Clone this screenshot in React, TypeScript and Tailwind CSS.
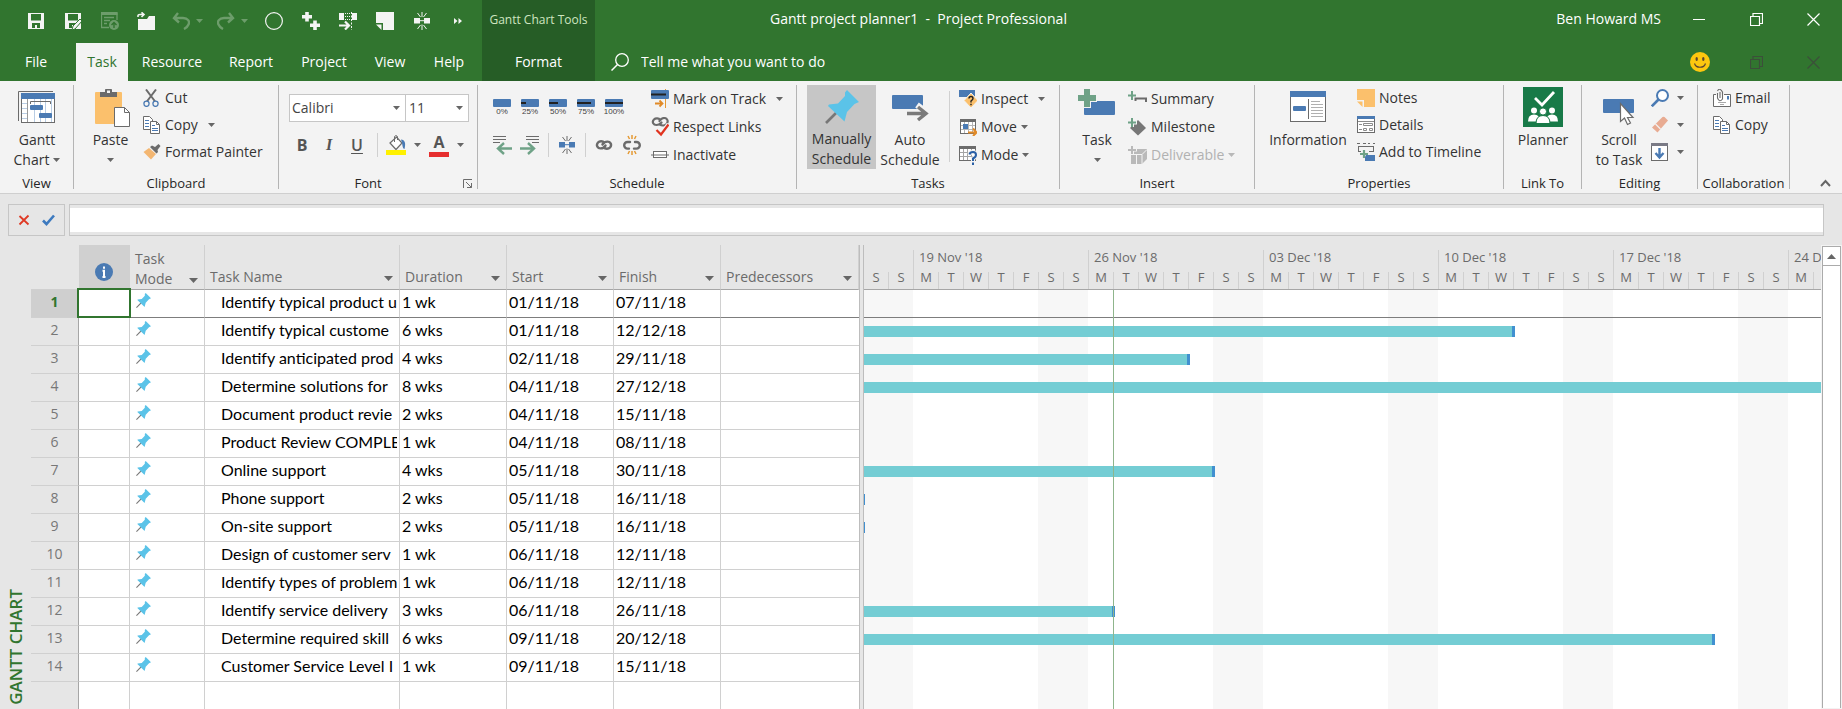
import React from "react";

type Kids = { children?: React.ReactNode };

const BLUE = "#4a7ab3";
const GRAY = "#6b6b6b";
const TEAL = "#6fa287";
const ORANGE = "#fbc06c";

function Ico({ x, y, w = 18, h = 18, children }: Kids & { x: number; y: number; w?: number; h?: number }) {
  return (
    <svg width={w} height={h} viewBox={`${x} ${y} ${w} ${h}`} fill="none" className="shrink-0" aria-hidden="true">
      {children}
    </svg>
  );
}

function Caret({ className = "text-[#666]" }: { className?: string }) {
  return (
    <svg width="7" height="4" viewBox="0 0 7 4" className={`shrink-0 ${className}`} aria-hidden="true">
      <path d="M0 0H7L3.5 4Z" fill="currentColor" />
    </svg>
  );
}

function Pin({ size }: { size: number }) {
  return (
    <svg width={size} height={size} viewBox="0 0 34 34" className="shrink-0" aria-hidden="true">
      <path d="M1 33L14 20" stroke="#777" strokeWidth="2.6" />
      <path d="M22 0L34 12L29.500 14L22 22L19.500 31.500L3 16L4 14.500L13 13.500L20 6V2.500Z" fill="#5bc3e8" />
    </svg>
  );
}

function Group({ label, width, children, corner }: Kids & { label: string; width: string; corner?: React.ReactNode }) {
  return (
    <section aria-label={label} className={`flex h-[104px] shrink-0 flex-col border-r border-[#b4b4b4] ${width}`}>
      <div className="flex h-[92px] items-start">{children}</div>
      <div className={`relative flex justify-center text-[13px] leading-3 whitespace-nowrap text-[#262626] ${corner ? "pr-5" : ""}`}>
        {label}
        {corner}
      </div>
    </section>
  );
}

function Big({ icon, lines, className = "", menu = "none" }: { icon: React.ReactNode; lines: string[]; className?: string; menu?: "none" | "inline" | "below" }) {
  return (
    <button type="button" className={`flex h-[84px] shrink-0 flex-col items-center whitespace-nowrap text-[#333] ${className}`}>
      <span className="h-[45px]">{icon}</span>
      {lines.map((l, i) => (
        <span key={l} className="flex items-center gap-1 leading-5">
          {l}
          {menu === "inline" && i === lines.length - 1 && <Caret />}
        </span>
      ))}
      {menu === "below" && <span className="pt-2"><Caret /></span>}
    </button>
  );
}

function Small({ icon, label, menu, disabled, tall }: { icon: React.ReactNode; label: string; menu?: "near" | "far"; disabled?: boolean; tall?: boolean }) {
  return (
    <button type="button" disabled={disabled} className={`flex items-center gap-1 whitespace-nowrap ${tall ? "h-7" : "h-[27px] pb-[2px]"} ${disabled ? "text-[#b1b1b1]" : "text-[#333]"}`}>
      {icon}
      <span>{label}</span>
      {menu === "near" && <Caret className={disabled ? "text-[#b8b8b8]" : "text-[#666]"} />}
      {menu === "far" && <span className="pl-[6px]"><Caret /></span>}
    </button>
  );
}

function IconButton({ label, children, className = "" }: Kids & { label: string; className?: string }) {
  return (
    <button type="button" aria-label={label} className={`flex shrink-0 items-center justify-center ${className}`}>
      {children}
    </button>
  );
}

const Rule = ({ className = "" }: { className?: string }) => <span className={`w-px shrink-0 bg-[#d0d0d0] ${className}`} />;

function CopyIcon() {
  return (
    <Ico x={143} y={115}>
      <path d="M143.500 115.500H149.500L152.500 118.500V128.500H143.500Z" fill="#fff" stroke={GRAY} />
      <path d="M145 119.500H149M145 122.500H149M145 125.500H149" stroke={BLUE} />
      <path d="M150.500 120.500H156.500L159.500 123.500V132.500H150.500Z" fill="#fff" stroke={GRAY} />
      <path d="M156.500 120.500V123.500H159.500" stroke={GRAY} />
      <path d="M152 124.500H155M152 127.500H158M152 129.500H158" stroke={BLUE} />
    </Ico>
  );
}

function ChainIcon({ broken = false }: { broken?: boolean }) {
  return (
    <Ico x={0} y={0} w={18} h={20}>
      <g stroke={GRAY} strokeWidth="2.4" strokeLinecap="round">
        <path d={broken ? "M7 7H4.500A3.300 3.300 0 0 0 4.500 13.600H6" : "M9 7.500C8 6 4.500 5.800 3 7.500C0.500 10.500 3 13.500 5.500 13.400C9 13.500 9.500 12 10.500 10.500"} />
        <path d={broken ? "M12 7H13.500A3.300 3.300 0 0 1 13.500 13.600H11" : "M9 12.500C10 14 13.500 14.200 15 12.500C17.500 9.500 15 6.500 12.500 6.600C9 6.500 8.500 8 7.500 9.500"} />
      </g>
      {broken && <path d="M9 0V4M5 1L6.500 4M13 1L11.500 4M9 16V20M5 19L6.500 16M13 19L11.500 16" stroke="#e59a35" strokeWidth="1.500" />}
    </Ico>
  );
}

function SplitIcon({ color, rays }: { color: string; rays: string }) {
  return (
    <Ico x={0} y={0} w={16} h={18}>
      <rect x="0" y="6" width="6" height="5.500" fill={color} />
      <rect x="10" y="6" width="6" height="5.500" fill={color} />
      <path d="M6 8.700H10" stroke={color} />
      <path d="M8 0V5M3.500 1L6.500 5M12.500 1L9.500 5M8 12.500V18M3.500 17L6.500 13M12.500 17L9.500 13" stroke={rays} />
    </Ico>
  );
}

function QuickAccess() {
  const slot = "h-10 w-[37px]";
  const dim = "#6d9d6b";
  return (
    <div className="flex h-[43px] items-start pt-px pl-[17px]">
      <IconButton label="Save" className={slot}>
        <Ico x={0} y={0}>
          <path d="M1 1H17V17H1Z" fill="#f4f4f4" />
          <path d="M4 2H14V8.500H4ZM5 11H13V16H10V13H8V16H5Z" fill="#31752f" />
        </Ico>
      </IconButton>
      <IconButton label="Save As" className={slot}>
        <Ico x={0} y={0}>
          <path d="M1 1H17V17H1Z" fill="#f4f4f4" />
          <path d="M4 2H14V8.500H4ZM5 11H12V16H10V13H8V16H5Z" fill="#31752f" />
          <path d="M8 18L9 14L16 7L18 9L11 17Z" fill="#f4f4f4" stroke="#31752f" />
        </Ico>
      </IconButton>
      <IconButton label="Publish" className={slot}>
        <Ico x={0} y={0}>
          <path d="M.5 1V15.500H8M.5 .5H16M16 .5V8M3 5.500H13M3 8.500H9M3 11.500H6" stroke={dim} strokeWidth="1.300" />
          <path d="M0 1.500H16.500" stroke={dim} strokeWidth="3" />
          <circle cx="13" cy="13" r="5" fill={dim} />
          <path d="M13 16V11M10.500 13L13 10.500L15.500 13" stroke="#31752f" strokeWidth="1.400" />
        </Ico>
      </IconButton>
      <IconButton label="Open" className={slot}>
        <Ico x={0} y={0} w={19} h={19}>
          <path d="M1 7H10L12 4H18V18H1Z" fill="#f4f4f4" />
          <path d="M1 5V3.500Q1 2.500 3 2.500H7M4.500 .3L7 2.500L4.500 5" stroke="#f4f4f4" strokeWidth="1.600" />
        </Ico>
      </IconButton>
      <IconButton label="Undo" className="h-10 w-[45px] gap-[6px]">
        <Ico x={0} y={0}>
          <path d="M6 1L2 6L7 10.500M2 6H11C16 6 18 9.500 16.500 12.500C15.500 15 14 16 12 17" stroke={dim} strokeWidth="2.400" />
        </Ico>
        <Caret className="text-[#6d9d6b]" />
      </IconButton>
      <IconButton label="Redo" className="h-10 w-[45px] gap-[6px]">
        <Ico x={0} y={0}>
          <path d="M12 1L16 6L11 10.500M16 6H7C2 6 0 9.500 1.500 12.500C2.500 15 4 16 6 17" stroke={dim} strokeWidth="2.400" />
        </Ico>
        <Caret className="text-[#6d9d6b]" />
      </IconButton>
      <IconButton label="Record" className={slot}>
        <Ico x={0} y={0}><circle cx="9" cy="9" r="8.400" stroke="#f4f4f4" strokeWidth="1.200" /></Ico>
      </IconButton>
      <IconButton label="Insert Task" className={slot}>
        <Ico x={0} y={0}>
          <path d="M5 0V9.500M0 4.700H10M13 8.500V18M8 13.200H18" stroke="#f4f4f4" strokeWidth="3.600" />
        </Ico>
      </IconButton>
      <IconButton label="Move Task" className={slot}>
        <Ico x={0} y={0}>
          <path d="M0 1H5V8H0ZM13 1H18V8H13Z" fill="#f4f4f4" />
          <path d="M6 1.500H12M6 4.500H12M6 7.500H12" stroke="#f4f4f4" strokeDasharray="1 1" />
          <path d="M12.500 0V18" stroke="#f4f4f4" strokeDasharray="2 1.500" />
          <path d="M0 13.500H9M6 9.500L10 13.500L6 17.500" stroke="#f4f4f4" strokeWidth="2.200" />
        </Ico>
      </IconButton>
      <IconButton label="Notes" className={slot}>
        <Ico x={0} y={0}>
          <path d="M0 0H18V18H7V11H0Z" fill="#f4f4f4" />
          <path d="M0 12.500H5.500V18Z" fill="#f4f4f4" />
        </Ico>
      </IconButton>
      <IconButton label="Split Task" className={slot}><SplitIcon color="#f4f4f4" rays="#f4f4f4" /></IconButton>
      <IconButton label="More commands" className="h-10 w-9">
        <Ico x={0} y={0} w={8} h={6}><path d="M0 0L3.500 3L0 6ZM4.500 0L8 3L4.500 6Z" fill="#f4f4f4" /></Ico>
      </IconButton>
    </div>
  );
}

const tabs: [string, string][] = [
  ["File", "w-[72px] mr-1 text-white"],
  ["Task", "w-[52px] bg-[#f3f3f3] text-[#31752f]"],
  ["Resource", "w-[88px] text-white"],
  ["Report", "w-[70px] text-white"],
  ["Project", "w-[76px] text-white"],
  ["View", "w-[56px] text-white"],
  ["Help", "w-[62px] text-white"],
];

function WindowIcon({ kind, color }: { kind: "min" | "restore" | "close"; color: string }) {
  return (
    <Ico x={0} y={0} w={13} h={13}>
      {kind === "min" && <path d="M0 6.500H12" stroke={color} />}
      {kind === "restore" && <path d="M.5 3.500H9.500V12.500H.5ZM3 3V.5H12.500V10.500H10" stroke={color} strokeWidth="1.200" />}
      {kind === "close" && <path d="M.5 .5L12.500 12.500M12.500 .5L.5 12.500" stroke={color} strokeWidth="1.200" />}
    </Ico>
  );
}

function Header() {
  return (
    <header className="grid grid-cols-[482px_113px_1fr] bg-[#31752f] text-white">
      <div>
        <QuickAccess />
        <nav className="flex h-[38px]" aria-label="Ribbon tabs">
          {tabs.map(([name, cls]) => (
            <button key={name} type="button" className={`shrink-0 ${cls}`}>{name}</button>
          ))}
        </nav>
      </div>
      <div className="flex flex-col bg-[#265d26]">
        <span className="flex h-[43px] items-center justify-center pb-1 text-xs whitespace-nowrap text-[#cfe5c0]">Gantt Chart Tools</span>
        <button type="button" className="h-[38px] w-full">Format</button>
      </div>
      <div className="min-w-0">
        <div className="flex h-[43px] items-start pl-[175px]">
          <h1 className="flex-1 leading-[38px] whitespace-pre">Gantt project planner1  -  Project Professional</h1>
          <span className="pr-[10px] leading-[38px] whitespace-nowrap">Ben Howard MS</span>
          <IconButton label="Minimize" className="h-[38px] w-[57px]"><WindowIcon kind="min" color="#fff" /></IconButton>
          <IconButton label="Restore" className="h-[38px] w-[57px]"><WindowIcon kind="restore" color="#fff" /></IconButton>
          <IconButton label="Close" className="h-[38px] w-[57px]"><WindowIcon kind="close" color="#fff" /></IconButton>
        </div>
        <div className="flex h-[38px] items-center pl-4">
          <label htmlFor="tell-me" className="mr-3" aria-label="Search">
            <Ico x={0} y={0}>
              <circle cx="11" cy="7" r="6.300" stroke="#fff" strokeWidth="1.300" />
              <path d="M6.500 11.500L.5 17.500" stroke="#fff" strokeWidth="1.500" />
            </Ico>
          </label>
          <input id="tell-me" type="text" placeholder="Tell me what you want to do" className="min-w-0 flex-1 bg-transparent outline-none placeholder:text-white" />
          <IconButton label="Feedback" className="h-[38px] w-[57px]">
            <Ico x={0} y={0} w={20} h={20}>
              <circle cx="10" cy="10" r="10" fill="#fdc70f" />
              <ellipse cx="6.700" cy="7" rx="1.200" ry="2" fill="#5a4632" />
              <ellipse cx="13.300" cy="7" rx="1.200" ry="2" fill="#5a4632" />
              <path d="M4.500 11.500C6 16.500 14 16.500 15.500 11.500" stroke="#5a4632" strokeWidth="1.200" />
            </Ico>
          </IconButton>
          <IconButton label="Restore document" className="h-[38px] w-[57px]"><WindowIcon kind="restore" color="#3c4f3a" /></IconButton>
          <IconButton label="Close document" className="h-[38px] w-[57px]"><WindowIcon kind="close" color="#3c4f3a" /></IconButton>
        </div>
      </div>
    </header>
  );
}

const percents: [string, number][] = [["0%", 0], ["25%", 5], ["50%", 9], ["75%", 14], ["100%", 18]];

function Ribbon() {
  return (
    <div className="flex items-start overflow-hidden border-b border-[#cfcfcf] bg-[#f3f3f3] py-1">
      <Group label="View" width="w-[74px]">
        <Big
          className="w-[74px]"
          lines={["Gantt", "Chart"]}
          menu="inline"
          icon={
            <Ico x={18} y={85} w={38} h={45}>
              <path d="M18.500 121V91.500H53" stroke={GRAY} />
              <rect x="21.500" y="93.500" width="33" height="29" fill="#fff" stroke={GRAY} />
              <rect x="21" y="93" width="34" height="6" fill={BLUE} />
              <path d="M34.500 99V122M40.500 99V122M45.500 99V122M51.500 99V122M22 103.500H27M22 108.500H27M22 113.500H27M22 118.500H27" stroke="#b9cde4" />
              <path d="M27.500 99V122" stroke="#999" />
              <path d="M30.500 104V101.500H50.500V104" stroke={GRAY} />
              <rect x="30" y="105" width="13" height="5" rx="1" fill={BLUE} />
              <rect x="39" y="113" width="13" height="5" rx="1" fill={BLUE} />
            </Ico>
          }
        />
      </Group>

      <Group label="Clipboard" width="w-[205px]">
        <Big
          className="ml-[9px] w-[55px]"
          lines={["Paste"]}
          menu="below"
          icon={
            <Ico x={92} y={85} w={38} h={45}>
              <rect x="95" y="92" width="27" height="32" rx="1" fill={ORANGE} />
              <path d="M100 92H105V89.500Q105 89 106 89H111Q112 89 112 89.500V92H117V97H100Z" fill={GRAY} />
              <rect x="107" y="90.500" width="3" height="2.500" fill="#f3f3f3" />
              <path d="M114.500 107.500H124.500L129.500 112.500V126.500H114.500Z" fill="#fff" stroke={GRAY} />
              <path d="M124.500 107.500V112.500H129.500" stroke={GRAY} />
            </Ico>
          }
        />
        <div className="ml-[5px] flex flex-col">
          <Small
            label="Cut"
            icon={
              <Ico x={143} y={88}>
                <path d="M146 88.500L155.500 101M156 88.500L146.500 101" stroke={GRAY} strokeWidth="2" />
                <circle cx="146.500" cy="102.800" r="2.600" stroke={BLUE} strokeWidth="1.300" fill="#f3f3f3" />
                <circle cx="155.500" cy="102.800" r="2.600" stroke={BLUE} strokeWidth="1.300" fill="#f3f3f3" />
              </Ico>
            }
          />
          <Small label="Copy" menu="far" icon={<CopyIcon />} />
          <Small
            label="Format Painter"
            icon={
              <Ico x={143} y={142}>
                <path d="M143.500 151L149 147L156 153L151 158.500Z" fill="#f3b671" />
                <path d="M150 146L152 144.500L155 146L158.500 143L160.500 145L157.500 149L158 151L156.500 152.500Z" fill={GRAY} />
              </Ico>
            }
          />
        </div>
      </Group>

      <Group
        label="Font"
        width="w-[199px]"
        corner={
          <button type="button" aria-label="Font settings" className="absolute right-1 bottom-0">
            <Ico x={0} y={0} w={10} h={10}>
              <path d="M.5 9V.5H9" stroke={GRAY} />
              <path d="M3 3L8.500 8.500M8.500 4V8.500H4" stroke={GRAY} />
            </Ico>
          </button>
        }
      >
        <div className="flex flex-col pt-[9px] pl-[10px]">
          <div className="flex h-7">
            <div className="relative flex w-[117px] items-center border border-[#c6c6c6] bg-white">
              <select aria-label="Font" className="h-full w-full appearance-none pl-[2px] text-[#444] outline-none">
                <option>Calibri</option>
              </select>
              <span className="pointer-events-none absolute right-[5px]"><Caret /></span>
            </div>
            <div className="relative flex w-[63px] items-center border border-l-0 border-[#c6c6c6] bg-white">
              <select aria-label="Font size" className="h-full w-full appearance-none pl-[3px] text-[#444] outline-none">
                <option>11</option>
              </select>
              <span className="pointer-events-none absolute right-[5px]"><Caret /></span>
            </div>
          </div>
          <div className="flex items-center pt-[11px] text-[#555]">
            <button type="button" className="h-6 w-[26px] text-base leading-6 font-bold">B</button>
            <button type="button" className="h-6 w-7 font-['Liberation_Serif',serif] text-base leading-6 font-bold italic">I</button>
            <button type="button" className="h-6 w-7 text-base leading-6 font-semibold underline underline-offset-2">U</button>
            <Rule className="ml-[6px] h-6" />
            <IconButton label="Fill color" className="ml-2 gap-2">
              <Ico x={386} y={135} w={20} h={20}>
                <path d="M390 143L396.500 137L402 143L396 149.500Z" fill="#fff" stroke={GRAY} strokeWidth="1.200" />
                <path d="M394.500 142V136.500Q396 134.500 397.500 136.500V140" stroke={GRAY} />
                <path d="M401 139.500C405 140 406 143 404.500 149C403 149 402.500 146 402 143Z" fill={BLUE} />
                <rect x="386" y="150" width="20" height="5" fill="#fff100" />
              </Ico>
              <Caret />
            </IconButton>
            <IconButton label="Font color" className="ml-2 gap-2">
              <span className="flex h-6 w-5 flex-col items-center border-b-[5px] border-[#e62e2e] text-base leading-[18px] font-bold">A</span>
              <Caret />
            </IconButton>
          </div>
        </div>
      </Group>

      <Group label="Schedule" width="w-[319px]">
        <div className="ml-[15px] flex w-[158px] flex-col">
          <div className="flex h-12 gap-[10px] pt-[14px]">
            {percents.map(([p, w]) => (
              <button key={p} type="button" className="flex w-[18px] flex-col items-center font-['Liberation_Sans',sans-serif] text-[8px] leading-[10px] text-[#444]">
                <Ico x={0} y={0} w={18} h={8}>
                  <rect width="18" height="8" rx="1" fill={BLUE} />
                  <rect y="3" width={w} height="2" fill="#222" />
                </Ico>
                {p}
              </button>
            ))}
          </div>
          <div className="flex h-6 items-center">
            <IconButton label="Outdent">
              <Ico x={493} y={135} w={20} h={20}>
                <path d="M493 136.500H506M493 139.500H506M493 142.500H500" stroke={GRAY} />
                <path d="M512 148.500H499M504 143L498 148.500L504 154" stroke={TEAL} strokeWidth="2.400" />
              </Ico>
            </IconButton>
            <IconButton label="Indent" className="ml-[7px]">
              <Ico x={520} y={135} w={20} h={20}>
                <path d="M526 136.500H539M526 139.500H539M532 142.500H539" stroke={GRAY} />
                <path d="M520 148.500H533M528 143L534 148.500L528 154" stroke={TEAL} strokeWidth="2.400" />
              </Ico>
            </IconButton>
            <Rule className="ml-2 h-6" />
            <IconButton label="Split Task" className="ml-[10px]"><SplitIcon color={BLUE} rays={GRAY} /></IconButton>
            <Rule className="ml-[10px] h-6" />
            <IconButton label="Link Tasks" className="ml-[9px]"><ChainIcon /></IconButton>
            <IconButton label="Unlink Tasks" className="ml-[10px]"><ChainIcon broken /></IconButton>
          </div>
        </div>
        <div className="flex flex-col">
          <Small
            tall
            label="Mark on Track"
            menu="far"
            icon={
              <Ico x={651} y={89} h={20}>
                <path d="M665.500 89V108" stroke="#e59a35" />
                <rect x="651" y="90" width="18" height="9" rx="1" fill={BLUE} />
                <rect x="651" y="93.500" width="15" height="2" fill="#222" />
                <path d="M655 103.500H662M659.500 100.500L662.500 103.500L659.500 106.500" stroke="#e08a28" strokeWidth="1.800" />
              </Ico>
            }
          />
          <Small
            tall
            label="Respect Links"
            icon={
              <Ico x={651} y={117} h={20}>
                <g stroke={GRAY} strokeWidth="2.200" strokeLinecap="round">
                  <path d="M660 120C659 118 655.500 118 654 119.500C651.500 122 653.500 125 656.500 125C659.500 125 660 124 661.500 122.500" />
                  <path d="M660 124.500C662 126 665 125.500 666.500 124C669 121 667 118 664 118C661.500 118 660.500 119.500 659.500 121" />
                </g>
                <path d="M656.500 130L661 134.500L668.500 124" stroke="#f3f3f3" strokeWidth="4" />
                <path d="M656.500 130L661 134.500L668.500 124.500" stroke="#e0321e" strokeWidth="2.200" />
              </Ico>
            }
          />
          <Small
            tall
            label="Inactivate"
            icon={
              <Ico x={651} y={145}>
                <path d="M651 154H669" stroke={GRAY} />
                <rect x="653.500" y="150.500" width="13" height="6" fill="#fff" stroke={GRAY} />
                <path d="M654 154H666" stroke={GRAY} />
              </Ico>
            }
          />
        </div>
      </Group>

      <Group label="Tasks" width="w-[263px]">
        <Big
          className="ml-[10px] w-[69px] bg-[#c6c6c6]"
          lines={["Manually", "Schedule"]}
          icon={<span className="block pt-[5px]"><Pin size={34} /></span>}
        />
        <Big
          className="w-[68px]"
          lines={["Auto", "Schedule"]}
          icon={
            <Ico x={891} y={85} w={38} h={45}>
              <rect x="892" y="95" width="31" height="14" rx="1" fill={BLUE} />
              <path d="M906 113.500H921M917 105L928.500 113.500L917 121" stroke="#f3f3f3" strokeWidth="6" />
              <path d="M907 113.500H926M918 107L926 113.500L918 120" stroke="#7a7a7a" strokeWidth="3.400" />
            </Ico>
          }
        />
        <Rule className="mt-[6px] ml-[5px] h-[71px]" />
        <div className="ml-[9px] flex flex-col">
          <Small
            tall
            label="Inspect"
            menu="far"
            icon={
              <Ico x={959} y={89} h={20}>
                <rect x="959" y="90" width="16" height="7" fill={BLUE} />
                <path d="M971 93L978 100.500L971 108L964 100.500Z" fill={ORANGE} stroke="#f3f3f3" strokeWidth="1" />
                <path d="M969 98.500Q969 96.500 971 96.500Q973 96.500 973 98.500Q973 99.500 971 101V102.500M971 103.700V105.200" stroke="#222" strokeWidth="1.400" />
              </Ico>
            }
          />
          <Small
            tall
            label="Move"
            menu="near"
            icon={
              <Ico x={959} y={117}>
                <rect x="960.500" y="118.500" width="15" height="14" fill="#fff" stroke={GRAY} />
                <rect x="960" y="118" width="16" height="3" fill={GRAY} />
                <path d="M964.500 121V132M968.500 121V132M972.500 121V132M961 124.500H975M961 128.500H975" stroke="#b5b5b5" />
                <rect x="963" y="123" width="5" height="5" fill={BLUE} />
                <path d="M968 131.500H976M973 127.500L976.500 131.500L973 135" stroke="#e08a28" strokeWidth="2" />
              </Ico>
            }
          />
          <Small
            tall
            label="Mode"
            menu="near"
            icon={
              <Ico x={959} y={145} h={19}>
                <rect x="959.500" y="145.500" width="16" height="14" fill="#fff" stroke={GRAY} />
                <rect x="959" y="145" width="17" height="3" fill={GRAY} />
                <path d="M963.500 148V159M967.500 148V159M971.500 148V159M960 151.500H975M960 155.500H975" stroke="#a5a5a5" />
                <path d="M969.500 153.500Q970 151 973 151Q976 151 976 154Q976 156 973 157.500V160M973 161.500V164" stroke="#f3f3f3" strokeWidth="4" />
                <path d="M969.500 153.500Q970 151 973 151Q976 151 976 154Q976 156 973 157.500V160M973 161.500V164" stroke="#2a5fa5" strokeWidth="2" />
              </Ico>
            }
          />
        </div>
      </Group>

      <Group label="Insert" width="w-[195px]">
        <Big
          className="ml-[10px] w-[54px]"
          lines={["Task"]}
          menu="below"
          icon={
            <Ico x={1078} y={85} w={38} h={45}>
              <rect x="1084" y="101" width="31" height="14" rx="1" fill={BLUE} />
              <path d="M1087 88V108M1077 98H1097" stroke="#f3f3f3" strokeWidth="8" />
              <path d="M1087 89V107M1078 98H1096" stroke={TEAL} strokeWidth="6" />
            </Ico>
          }
        />
        <div className="ml-1 flex flex-col">
          <Small
            tall
            label="Summary"
            icon={
              <Ico x={1128} y={89} w={19}>
                <path d="M1132 90V99M1128 94.500H1136" stroke={TEAL} strokeWidth="2" />
                <path d="M1135.500 100V97.500H1146V101" stroke={GRAY} strokeWidth="2" />
              </Ico>
            }
          />
          <Small
            tall
            label="Milestone"
            icon={
              <Ico x={1128} y={117} w={19}>
                <path d="M1138 119L1146 127L1138 134.500L1130 127Z" fill="#777" />
                <path d="M1132 117V126M1128 121.500H1137" stroke="#f3f3f3" strokeWidth="4" />
                <path d="M1132 117V126M1128 121.500H1136" stroke={TEAL} strokeWidth="2" />
              </Ico>
            }
          />
          <Small
            tall
            label="Deliverable"
            menu="near"
            disabled
            icon={
              <Ico x={1128} y={145} w={19}>
                <path d="M1131 152L1136 148H1147V158L1142 163H1131Z" fill="#b9b9b9" />
                <path d="M1131 153.500H1142M1142 153.500L1147 148.500M1142 153.500V163M1136.500 153V163" stroke="#f3f3f3" />
                <path d="M1132 144V153M1128 148.500H1137" stroke="#f3f3f3" strokeWidth="4" />
                <path d="M1132 145V153M1128 149H1136" stroke="#b9b9b9" strokeWidth="2" />
              </Ico>
            }
          />
        </div>
      </Group>

      <Group label="Properties" width="w-[249px]">
        <Big
          className="ml-[6px] w-[94px]"
          lines={["Information"]}
          icon={
            <Ico x={1290} y={85} w={36} h={45}>
              <rect x="1290.500" y="91.500" width="35" height="30" fill="#fff" stroke={GRAY} />
              <rect x="1290" y="91" width="36" height="6" fill={BLUE} />
              <rect x="1293" y="106" width="13" height="5" rx="1" fill={BLUE} />
              <path d="M1308.500 99V119" stroke={GRAY} />
              <path d="M1311 101.500H1320M1311 104.500H1323M1311 107.500H1323M1311 110.500H1323M1311 113.500H1323M1311 116.500H1323" stroke="#b0b0b0" />
            </Ico>
          }
        />
        <div className="ml-[2px] flex flex-col">
          <Small
            label="Notes"
            icon={
              <Ico x={1357} y={88}>
                <path d="M1357 88H1375V106H1364V99H1357Z" fill={ORANGE} />
                <path d="M1357 100.500H1362.500V106Z" fill={ORANGE} />
              </Ico>
            }
          />
          <Small
            label="Details"
            icon={
              <Ico x={1357} y={115}>
                <rect x="1357.500" y="115.500" width="17" height="16" fill="#fff" stroke={GRAY} />
                <rect x="1357" y="115" width="18" height="3" fill={BLUE} />
                <path d="M1358 120.500H1374M1359 123.500H1362M1359 128.500H1362" stroke="#8c8c8c" />
                <path d="M1363.500 122.500H1372.500V124.500H1363.500ZM1363.500 127.500H1366.500V129.500H1363.500ZM1369.500 127.500H1372.500V129.500H1369.500Z" stroke="#8c8c8c" />
              </Ico>
            }
          />
          <Small
            label="Add to Timeline"
            icon={
              <Ico x={1357} y={142}>
                <path d="M1357 142.500H1360M1363 142.500H1366M1368 142.500H1370M1373 142.500H1375M1358.500 145V151M1373.500 145V151M1358 145.500H1374M1358 150.500H1361M1369 150.500H1374" stroke={GRAY} />
                <path d="M1364 149V157M1360 153H1368" stroke={TEAL} strokeWidth="2.200" />
                <path d="M1366 154H1375V160H1365V156Z" fill={BLUE} />
              </Ico>
            }
          />
        </div>
      </Group>

      <Group label="Link To" width="w-[78px]">
        <Big
          className="w-[78px]"
          lines={["Planner"]}
          icon={
            <Ico x={1523} y={85} w={40} h={45}>
              <rect x="1523" y="87" width="40" height="40" fill="#187a48" />
              <path d="M1535 98L1542 105L1554 92" stroke="#fff" strokeWidth="2.800" />
              <g fill="#fff">
                <circle cx="1534" cy="110.500" r="3" />
                <circle cx="1552" cy="110.500" r="3" />
                <path d="M1528 121.500Q1528 114.500 1534 114.500T1540 121.500ZM1546 121.500Q1546 114.500 1552 114.500T1558 121.500Z" />
              </g>
              <circle cx="1543" cy="111.500" r="3.600" fill="#fff" stroke="#187a48" />
              <path d="M1536 123.500Q1536 115.500 1543 115.500T1550 123.500Z" fill="#fff" stroke="#187a48" />
            </Ico>
          }
        />
      </Group>

      <Group label="Editing" width="w-[116px]">
        <Big
          className="ml-[6px] w-[62px]"
          lines={["Scroll", "to Task"]}
          icon={
            <Ico x={1604} y={85} w={32} h={45}>
              <rect x="1604" y="99" width="31" height="14" rx="1" fill={BLUE} />
              <path d="M1621.500 103.500V121.500L1625.500 118L1628.500 124.500L1631.500 123L1628.500 117.500H1634Z" fill="#fff" stroke={GRAY} strokeWidth="1.200" />
            </Ico>
          }
        />
        <div className="ml-px flex flex-col">
          <IconButton label="Find" className="h-[27px] gap-2 pb-[2px]">
            <Ico x={1651} y={88}>
              <circle cx="1662.500" cy="94.500" r="5.500" fill="#fff" stroke={BLUE} strokeWidth="2" />
              <path d="M1658.500 98.500L1651.800 105.300" stroke={BLUE} strokeWidth="2.600" />
            </Ico>
            <Caret />
          </IconButton>
          <IconButton label="Clear" className="h-[27px] gap-2 pb-[2px]">
            <Ico x={1651} y={115}>
              <path d="M1652 126.500L1662.500 116Q1663.500 115.500 1664.500 116L1668 119.500L1657.500 131.500Z" fill="#e8ab92" />
              <path d="M1655.500 123L1660.500 128" stroke="#f3f3f3" strokeWidth="1.200" />
            </Ico>
            <Caret />
          </IconButton>
          <IconButton label="Fill" className="h-[27px] gap-2 pb-[2px]">
            <Ico x={1651} y={142}>
              <rect x="1651.500" y="142.500" width="16" height="17" fill="#fff" stroke={GRAY} />
              <rect x="1651" y="142" width="17" height="3" fill="#7a7a85" />
              <path d="M1659.500 147V156M1655.500 152L1659.500 156.500L1663.500 152" stroke={BLUE} strokeWidth="2.400" />
            </Ico>
            <Caret />
          </IconButton>
        </div>
      </Group>

      <Group label="Collaboration" width="w-[92px]">
        <div className="ml-[15px] flex flex-col">
          <Small
            label="Email"
            icon={
              <Ico x={1713} y={87}>
                <path d="M1716 92.500H1713.500V104.500H1730.500V92.500H1724" fill="#fff" stroke={GRAY} />
                <path d="M1718 100.500H1726M1720 102.500H1724" stroke="#aaa" />
                <rect x="1727" y="94" width="2" height="3.500" fill={BLUE} />
                <path d="M1717.500 91V96Q1719.500 101 1722.500 97V90Q1719.500 85 1717.500 89M1720 90V96" stroke={GRAY} strokeWidth="1.100" />
              </Ico>
            }
          />
          <Small label="Copy" icon={<CopyIcon />} />
        </div>
      </Group>

      <div className="flex h-[104px] flex-1 items-end justify-end pr-[11px] pb-[2px]">
        <IconButton label="Collapse the ribbon">
          <Ico x={0} y={0} w={11} h={8}><path d="M1 7L5.500 2L10 7" stroke="#666" strokeWidth="2" /></Ico>
        </IconButton>
      </div>
    </div>
  );
}

function EntryBar() {
  return (
    <div className="flex gap-1 px-2 pt-[10px] pb-[9px]">
      <div className="flex h-8 w-[57px] items-center justify-center gap-3 border border-[#c6c6c6]">
        <IconButton label="Cancel entry">
          <Ico x={0} y={0} w={12} h={12}><path d="M1.500 2L10.500 10.500M10.500 1.500L1.500 10.500" stroke="#df3a25" strokeWidth="1.800" /></Ico>
        </IconButton>
        <IconButton label="Accept entry">
          <Ico x={0} y={0} w={13} h={12}><path d="M1 6.500L4.500 10L12 1.500" stroke="#3d7abf" strokeWidth="2.600" /></Ico>
        </IconButton>
      </div>
      <div className="mr-[10px] flex h-8 flex-1 border border-[#c6c6c6] py-[3px]">
        <input aria-label="Entry" type="text" className="w-full bg-white px-2 outline-none" />
      </div>
    </div>
  );
}

type Task = { name: string; duration: string; start: string; finish: string; days: number };

// `days` counts from the first visible day through the finish date; 0 ends at the left edge.
const tasks: Task[] = [
  { name: "Identify typical product u", duration: "1 wk", start: "01/11/18", finish: "07/11/18", days: -1 },
  { name: "Identify typical custome", duration: "6 wks", start: "01/11/18", finish: "12/12/18", days: 26 },
  { name: "Identify anticipated prod", duration: "4 wks", start: "02/11/18", finish: "29/11/18", days: 13 },
  { name: "Determine solutions for", duration: "8 wks", start: "04/11/18", finish: "27/12/18", days: 41 },
  { name: "Document product revie", duration: "2 wks", start: "04/11/18", finish: "15/11/18", days: -1 },
  { name: "Product Review COMPLE", duration: "1 wk", start: "04/11/18", finish: "08/11/18", days: -1 },
  { name: "Online support", duration: "4 wks", start: "05/11/18", finish: "30/11/18", days: 14 },
  { name: "Phone support", duration: "2 wks", start: "05/11/18", finish: "16/11/18", days: 0 },
  { name: "On-site support", duration: "2 wks", start: "05/11/18", finish: "16/11/18", days: 0 },
  { name: "Design of customer serv", duration: "1 wk", start: "06/11/18", finish: "12/11/18", days: -1 },
  { name: "Identify types of problem", duration: "1 wk", start: "06/11/18", finish: "12/11/18", days: -1 },
  { name: "Identify service delivery", duration: "3 wks", start: "06/11/18", finish: "26/11/18", days: 10 },
  { name: "Determine required skill", duration: "6 wks", start: "09/11/18", finish: "20/12/18", days: 34 },
  { name: "Customer Service Level I", duration: "1 wk", start: "09/11/18", finish: "15/11/18", days: -1 },
];

const DAY = 25;
const weeks = ["19 Nov '18", "26 Nov '18", "03 Dec '18", "10 Dec '18", "17 Dec '18", "24 Dec '18"];
const dayLetters = ["M", "T", "W", "T", "F", "S", "S"];

function HeadCell({ label, plain }: { label: string; plain?: boolean }) {
  return (
    <th scope="col" className="border-r border-b border-r-[#d0d0d0] border-b-[#a6a6a6] p-0 align-bottom font-normal">
      <div className={`flex items-end justify-between pr-[6px] pl-[5px] text-left leading-5 text-[#6b6b6b] ${plain ? "" : "pb-[2px]"}`}>
        <span>{label}</span>
        <span className="pb-[6px]"><svg width="9" height="5" viewBox="0 0 9 5" aria-hidden="true"><path d="M0 0H9L4.500 5Z" fill="#666" /></svg></span>
      </div>
    </th>
  );
}

function Sheet() {
  const cell = "border-r border-r-[#d0d0d0] border-b p-0";
  return (
    <table className="w-[828px] shrink-0 table-fixed border-separate border-spacing-0">
      <colgroup>
        <col className="w-12" />
        <col className="w-[51px]" />
        <col className="w-[75px]" />
        <col className="w-[195px]" />
        <col className="w-[107px]" />
        <col className="w-[107px]" />
        <col className="w-[107px]" />
        <col className="w-[138px]" />
      </colgroup>
      <thead>
        <tr className="h-[45px]">
          <td className="border-b border-[#d0d0d0]" />
          <th scope="col" aria-label="Indicators" className="border-b border-[#a6a6a6] bg-[#d0d0d0] p-0">
            <span className="flex justify-center pt-[10px] pr-[2px]">
              <Ico x={0} y={0}>
                <circle cx="9" cy="9" r="9" fill={BLUE} />
                <path d="M9 3.500V5.800M7.500 7.800H9V14M7.500 14H10.500" stroke="#fff" strokeWidth="2" />
              </Ico>
            </span>
          </th>
          <HeadCell label="Task Mode" plain />
          <HeadCell label="Task Name" />
          <HeadCell label="Duration" />
          <HeadCell label="Start" />
          <HeadCell label="Finish" />
          <HeadCell label="Predecessors" />
        </tr>
      </thead>
      <tbody className="bg-white font-[Lato,'Open_Sans',sans-serif] text-base leading-[23px] whitespace-nowrap text-black">
        {tasks.map((t, i) => {
          const first = i === 0;
          const line = first ? "border-b-[#7d7d7d]" : "border-b-[#d0d0d0]";
          return (
            <tr key={t.name} className="h-7">
              <th scope="row" className={`border-r border-b border-r-[#a6a6a6] border-b-[#d0d0d0] p-0 pb-[3px] font-['Open_Sans',sans-serif] text-sm leading-6 ${first ? "bg-[#cfcfcf] font-bold text-[#31752f]" : "bg-[#e6e6e6] font-normal text-[#777]"}`}>
                {i + 1}
              </th>
              <td className={`${cell} ${line} relative`}>
                {first && <span className="absolute -inset-x-0.5 -top-0.5 -bottom-px border-2 border-[#31752f]" />}
              </td>
              <td className={`${cell} ${line} pb-[6px] pl-[6px]`}><Pin size={15} /></td>
              <td className={`${cell} ${line} pb-1`}><div className="mr-0.5 overflow-hidden pl-4">{t.name}</div></td>
              <td className={`${cell} ${line} pb-1 pl-[2px]`}>{t.duration}</td>
              <td className={`${cell} ${line} pb-1 pl-[2px]`}>{t.start}</td>
              <td className={`${cell} ${line} pb-1 pl-[2px]`}>{t.finish}</td>
              <td className={`border-b p-0 ${line}`} />
            </tr>
          );
        })}
        {[0, 1].map((n) => (
          <tr key={n} className="h-7">
            <th className="border-r border-b border-r-[#a6a6a6] border-b-[#d0d0d0] bg-[#e6e6e6] p-0" />
            {[0, 1, 2, 3, 4, 5].map((c) => <td key={c} className={`${cell} border-b-[#d0d0d0]`} />)}
            <td className="border-b border-[#d0d0d0] p-0" />
          </tr>
        ))}
      </tbody>
    </table>
  );
}

function Timeline() {
  const letter = "flex h-[17px] items-center justify-center pb-[6px] shrink-0";
  return (
    <div className="flex min-w-0 flex-1 flex-col overflow-hidden">
      <div className="flex h-[45px] shrink-0 items-end overflow-hidden border-b border-[#a6a6a6] pt-[5px] text-[13px] text-[#6b6b6b]">
        <span className={`${letter} w-6`}>S</span>
        <span className={`${letter} w-[25px] border-l border-[#d0d0d0]`}>S</span>
        {weeks.map((w) => (
          <div key={w} className="w-[175px] shrink-0 border-l border-[#d0d0d0]">
            <div className="h-[22px] pl-[5px] leading-[14px] whitespace-nowrap">{w}</div>
            <div className="flex">
              {dayLetters.map((d, i) => (
                <span key={i} className={`${letter} ${i ? "w-[25px] border-l border-[#d0d0d0]" : "w-6"}`}>{d}</span>
              ))}
            </div>
          </div>
        ))}
      </div>
      <div className="relative min-h-0 flex-1 overflow-hidden bg-white">
        <div className="absolute inset-0 flex" aria-hidden="true">
          <div className="w-[49px] shrink-0 bg-[#f7f7f7]" />
          {weeks.map((w) => <div key={w} className="w-[175px] shrink-0 border-r-[50px] border-[#f7f7f7]" />)}
        </div>
        <div className="relative">
          {tasks.map((t, i) => (
            <div key={t.name} className={`h-7 pt-2 ${i === 0 ? "border-b border-[#7d7d7d]" : ""}`}>
              {t.days === 0 && <div className="h-[11px] w-px bg-[#4190d0]" />}
              {t.days > 0 && <div className="h-[11px] border-r-[3px] border-[#4190d0] bg-[#74cdd4]" style={{ width: t.days * DAY + 1 }} />}
            </div>
          ))}
        </div>
        <div className="absolute inset-y-0 w-px bg-[#8fb58c]" style={{ left: 10 * DAY - 1 }} aria-hidden="true" />
      </div>
    </div>
  );
}

export default function App() {
  return (
    <div className="flex h-screen flex-col overflow-hidden bg-[#e6e6e6] font-['Open_Sans','Noto_Sans',sans-serif] text-sm">
      <Header />
      <Ribbon />
      <EntryBar />
      <main className="flex min-h-0 flex-1 overflow-hidden">
        <div className="flex w-[31px] shrink-0 items-end justify-center pb-1">
          <span className="rotate-180 text-[17px] leading-5 font-semibold whitespace-nowrap text-[#31752f] [writing-mode:vertical-rl]">GANTT CHART</span>
        </div>
        <div className="shrink-0 overflow-hidden"><Sheet /></div>
        <div className="w-[5px] shrink-0 border-x border-[#bdbdbd]" />
        <Timeline />
        <div className="flex w-[21px] shrink-0 flex-col border border-[#f3f3f3] bg-white">
          <button type="button" aria-label="Scroll up" className="flex h-5 shrink-0 items-center justify-center border border-[#ababab]">
            <svg width="9" height="5" viewBox="0 0 9 5" aria-hidden="true"><path d="M0 5H9L4.500 0Z" fill="#666" /></svg>
          </button>
          <div className="flex-1 border-x border-[#ababab]" />
        </div>
      </main>
    </div>
  );
}
